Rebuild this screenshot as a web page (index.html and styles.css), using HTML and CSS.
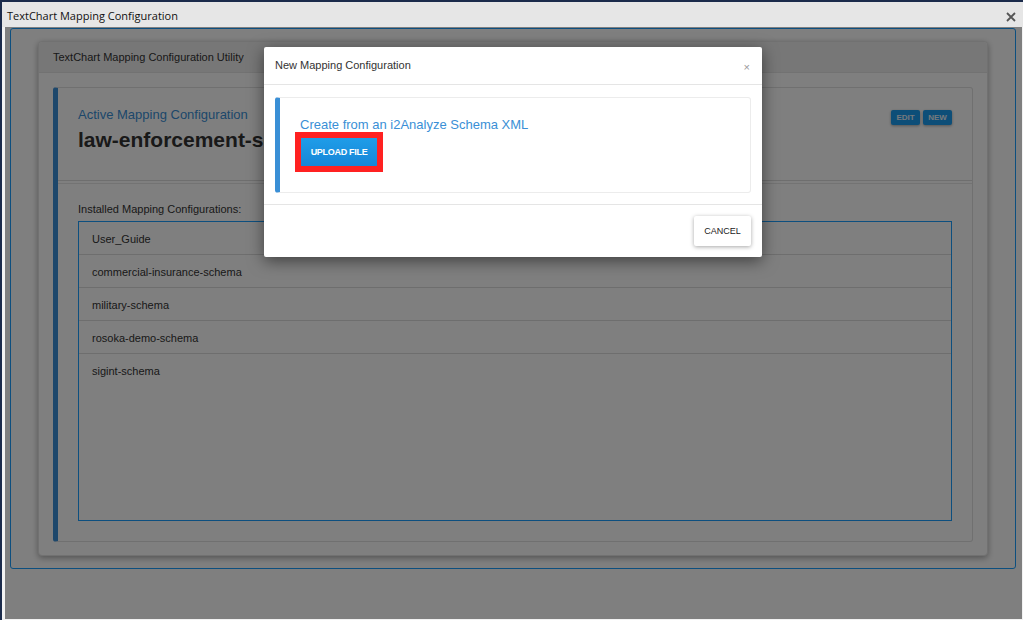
FILE: index.html
```html
<!DOCTYPE html>
<html>
<head>
<meta charset="utf-8">
<title>TextChart Mapping Configuration</title>
<link rel="stylesheet" href="styles.css">
</head>
<body>
<div class="window">
  <div class="titlebar">
    <span class="win-title">TextChart Mapping Configuration</span>
    <svg class="win-close" width="10" height="10" viewBox="0 0 10 10"><path d="M1 1L9 9M9 1L1 9" stroke="#555" stroke-width="1.8" fill="none"/></svg>
  </div>
  <div class="client">
    <div class="app">
      <div class="card">
        <div class="card-header">TextChart Mapping Configuration Utility</div>
        <div class="card-body">
          <div class="panel">
            <div class="panel-top">
              <div class="active">
                <div class="active-label">Active Mapping Configuration</div>
                <div class="active-name">law-enforcement-schema</div>
              </div>
              <div class="actions">
                <button class="btn-small">EDIT</button>
                <button class="btn-small">NEW</button>
              </div>
            </div>
            <div class="panel-body">
              <div class="list-label">Installed Mapping Configurations:</div>
              <div class="list">
                <div class="list-item">User_Guide</div>
                <div class="list-item">commercial-insurance-schema</div>
                <div class="list-item">military-schema</div>
                <div class="list-item">rosoka-demo-schema</div>
                <div class="list-item last">sigint-schema</div>
              </div>
            </div>
          </div>
        </div>
      </div>
    </div>
    <div class="backdrop"></div>
    <div class="modal">
      <div class="modal-header">
        <span class="modal-title">New Mapping Configuration</span>
        <span class="modal-close">×</span>
      </div>
      <div class="modal-body">
        <div class="callout">
          <div class="callout-title">Create from an i2Analyze Schema XML</div>
          <button class="btn-upload">UPLOAD FILE</button>
        </div>
      </div>
      <div class="modal-footer">
        <button class="btn-cancel">CANCEL</button>
      </div>
    </div>
  </div>
</div>
</body>
</html>
```

FILE: styles.css
```css
* { box-sizing: border-box; }
html, body { margin: 0; padding: 0; }
body {
  width: 1023px;
  height: 620px;
  overflow: hidden;
  background: #f2f2f2;
  font-family: "Liberation Sans", Arial, sans-serif;
  color: #333;
}
button { font-family: "Liberation Sans", Arial, sans-serif; border: 0; padding: 0; cursor: pointer; }

.window {
  width: 1023px;
  height: 620px;
  display: flex;
  flex-direction: column;
  border-left: 2px solid #1b2b4b;
  background: #f2f2f2;
}
.titlebar {
  height: 27px;
  flex: none;
  background: #e6e6e6;
  border-top: 2px solid #1b2b4b;
  display: flex;
  align-items: center;
  justify-content: space-between;
  padding: 0 7px 0 5px;
}
.win-title {
  font-family: "Open Sans", "Noto Sans", sans-serif;
  font-size: 11px;
  color: #111;
  margin-top: 1px;
}
.win-close { margin-top: 4px; }

.client {
  position: relative;
  height: 592px;
  margin-left: 3px;
  margin-right: 1px;
  background: #fff;
  padding: 1px 0 0 5px;
}

.app {
  width: 1006px;
  height: 541px;
  border: 1px solid #1a9fff;
  border-radius: 3px;
  padding: 12px 27px;
  display: flex;
  flex-direction: column;
}
.card {
  flex: 1;
  display: flex;
  flex-direction: column;
  border: 1px solid #e2e2e2;
  border-radius: 4px;
  background: #fff;
  box-shadow: 0 2px 6px rgba(0,0,0,0.35);
}
.card-header {
  height: 31px;
  background: #eeeeee;
  border-bottom: 1px solid #e4e4e4;
  font-size: 11px;
  line-height: 31px;
  padding-left: 14px;
  color: #333;
  border-radius: 4px 4px 0 0;
}
.card-body {
  flex: 1;
  padding: 14px 14px 13px;
  display: flex;
  flex-direction: column;
}
.panel {
  flex: 1;
  display: flex;
  flex-direction: column;
  border: 1px solid #e0e0e0;
  border-left: 5px solid #3a8fd6;
  border-radius: 3px;
  background: #fff;
}
.panel-top {
  height: 93px;
  flex: none;
  padding: 19px 20px 0;
  display: flex;
  justify-content: space-between;
  align-items: flex-start;
  border-bottom: 1px solid #dcdcdc;
  margin-bottom: 2px;
}
.active-label {
  font-size: 13px;
  line-height: 16px;
  color: #3a8fd6;
}
.active-name {
  font-size: 21px;
  line-height: 24px;
  font-weight: bold;
  color: #333;
  margin-top: 5px;
}
.actions {
  display: flex;
  gap: 3px;
  margin-top: 3px;
}
.btn-small {
  width: 29px;
  height: 15px;
  background: #1b9cf0;
  color: #e8f2fa;
  font-size: 8px;
  font-weight: bold;
  border-radius: 2px;
  box-shadow: 0 1px 3px rgba(0,0,0,0.35);
}
.panel-body {
  flex: 1;
  border-top: 1px solid #e6e6e6;
  padding: 19px 20px 20px;
  display: flex;
  flex-direction: column;
}
.list-label {
  font-size: 11px;
  line-height: 13px;
  color: #333;
  margin-bottom: 5px;
}
.list {
  flex: 1;
  border: 1px solid #1a9fff;
}
.list-item {
  height: 33px;
  padding: 11px 13px 0;
  font-size: 11px;
  line-height: 13px;
  color: #333;
  border-bottom: 1px solid #dddddd;
}
.list-item.last { border-bottom: 0; }

.backdrop {
  position: absolute;
  inset: 0;
  background: rgba(0,0,0,0.5);
}

.modal {
  position: absolute;
  left: 259px;
  top: 20px;
  width: 498px;
  background: #fff;
  border-radius: 2px;
  box-shadow: 0 4px 16px rgba(0,0,0,0.5);
}
.modal-header {
  height: 38px;
  padding: 12px 11px 0;
  border-bottom: 1px solid #e5e5e5;
  display: flex;
  justify-content: space-between;
  align-items: flex-start;
}
.modal-title {
  font-size: 11px;
  line-height: 13px;
  color: #333;
}
.modal-close {
  font-size: 11px;
  line-height: 13px;
  color: #999;
  margin-top: 2px;
  margin-right: 1px;
}
.modal-body {
  padding: 12px 11px 11px;
}
.callout {
  height: 96px;
  border: 1px solid #ececec;
  border-left: 5px solid #3a8fd6;
  border-radius: 3px;
  padding: 19px 20px 0;
}
.callout-title {
  font-size: 13px;
  line-height: 16px;
  color: #3a8fd6;
}
.btn-upload {
  display: block;
  margin: 5px 0 0 1px;
  width: 76px;
  height: 28px;
  background: linear-gradient(#1f9de8, #1686d8);
  color: #fff;
  font-size: 9px;
  font-weight: bold;
  letter-spacing: -0.3px;
  border-radius: 0;
  outline: 6px solid #ff2121;
  outline-offset: 0;
}
.modal-footer {
  height: 53px;
  border-top: 1px solid #e5e5e5;
  padding: 11px 11px 0;
  display: flex;
  justify-content: flex-end;
}
.btn-cancel {
  width: 57px;
  height: 30px;
  background: #fff;
  color: #222;
  font-size: 9px;
  border-radius: 2px;
  box-shadow: 0 1px 4px rgba(0,0,0,0.35);
}
```
